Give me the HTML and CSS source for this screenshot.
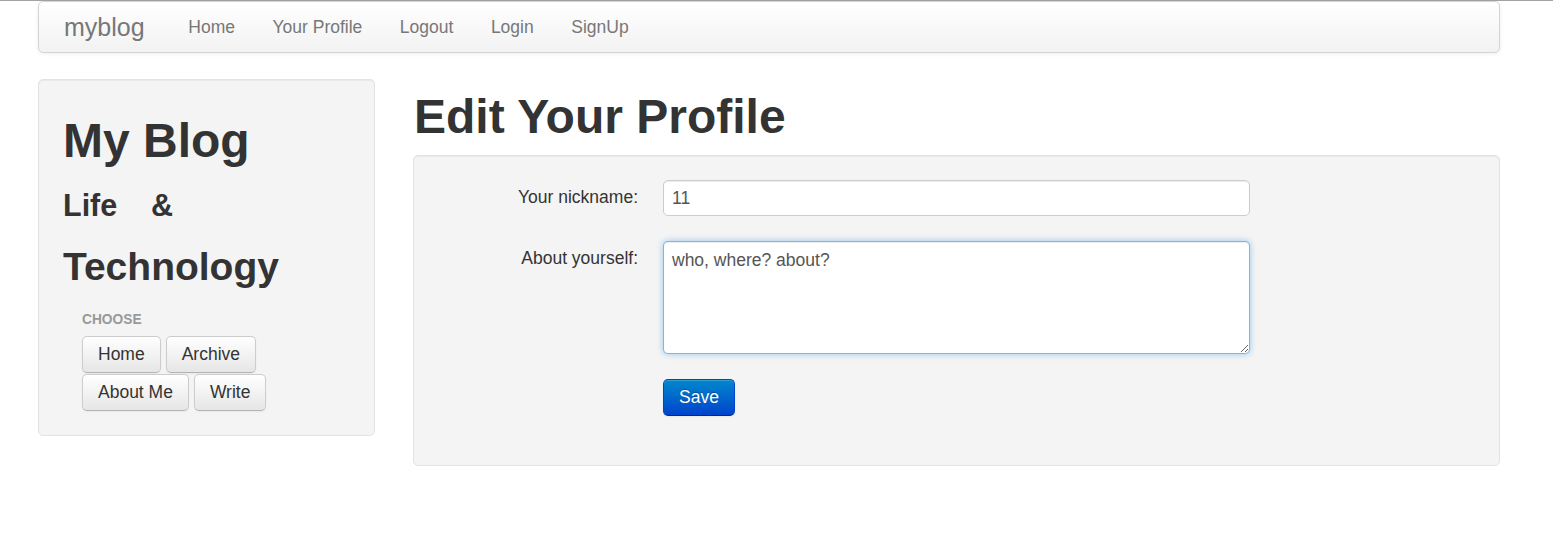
FILE: index.html
```html
<!DOCTYPE html>
<html>
<head>
<meta charset="utf-8">
<title>myblog</title>
<link rel="stylesheet" href="styles.css">
</head>
<body>
<div class="topline"></div>
<div class="container">
  <div class="navbar">
    <a class="brand" href="#">myblog</a>
    <ul class="nav">
      <li><a href="#">Home</a></li>
      <li><a href="#">Your Profile</a></li>
      <li><a href="#">Logout</a></li>
      <li><a href="#">Login</a></li>
      <li><a href="#">SignUp</a></li>
    </ul>
  </div>
  <div class="layout">
    <aside class="well sidebar">
      <h1 class="title">My Blog</h1>
      <h3 class="sub">Life&nbsp;&nbsp;&nbsp;&nbsp;&amp;</h3>
      <h2 class="tech">Technology</h2>
      <div class="nav-list">
        <div class="nav-header">CHOOSE</div>
        <div class="btns">
          <a class="btn" href="#">Home</a>
          <a class="btn" href="#">Archive</a>
          <a class="btn" href="#">About Me</a>
          <a class="btn" href="#">Write</a>
        </div>
      </div>
    </aside>
    <main class="main">
      <h1 class="page-title">Edit Your Profile</h1>
      <form class="well form">
        <div class="group">
          <label class="label">Your nickname:</label>
          <input class="input" type="text" value="11">
        </div>
        <div class="group">
          <label class="label">About yourself:</label>
          <textarea class="input textarea">who, where? about?</textarea>
        </div>
        <div class="group">
          <span class="label"></span>
          <button class="btn btn-primary" type="button">Save</button>
        </div>
      </form>
    </main>
  </div>
</div>
</body>
</html>
```

FILE: styles.css
```css
* { box-sizing: border-box; }
html, body { margin: 0; padding: 0; background: #fff; }
body {
  font-family: "Liberation Sans", Arial, sans-serif;
  font-size: 17.5px;
  line-height: 25px;
  color: #333;
}
.topline { height: 1px; background: #a3a3a3; }
.container { width: 1462px; margin-left: 38px; }

.navbar {
  display: flex;
  align-items: center;
  height: 52px;
  border: 1px solid #d4d4d4;
  border-radius: 5px;
  background: linear-gradient(#ffffff, #f2f2f2);
  box-shadow: 0 1px 4px rgba(0,0,0,0.065);
}
.brand {
  padding: 12px 25px;
  font-size: 25px;
  line-height: 25px;
  color: #777;
  text-decoration: none;
}
.nav { display: flex; list-style: none; margin: 0; padding: 0; }
.nav a {
  display: block;
  padding: 12px 18.75px;
  color: #777;
  text-decoration: none;
  font-size: 17.5px;
}

.layout {
  display: grid;
  grid-template-columns: 337px 1fr;
  column-gap: 38px;
  margin-top: 26px;
  align-items: start;
}
.well {
  background: #f4f4f4;
  border: 1px solid #e3e3e3;
  border-radius: 5px;
  box-shadow: inset 0 1px 1px rgba(0,0,0,0.05);
}
.sidebar { padding: 24px 24px 24px; }
.title {
  margin: 12px 0 0;
  font-size: 48px;
  line-height: 50px;
  font-weight: bold;
}
.sub {
  margin: 14px 0 0;
  font-size: 30.5px;
  line-height: 50px;
  font-weight: bold;
}
.tech {
  margin: 12px 0 0;
  font-size: 39px;
  line-height: 50px;
  font-weight: bold;
}
.nav-list { padding: 0 19px; margin-top: 15px; }
.nav-header {
  font-size: 13.75px;
  line-height: 25px;
  font-weight: bold;
  color: #999;
  text-transform: uppercase;
}
.btns { display: flex; flex-wrap: wrap; gap: 1px 5px; margin-top: 4px; }
.btn {
  display: inline-block;
  padding: 5px 15px;
  font-size: 17.5px;
  line-height: 25px;
  color: #333;
  text-decoration: none;
  border: 1px solid #ccc;
  border-bottom-color: #b3b3b3;
  border-radius: 5px;
  background: linear-gradient(#ffffff, #e6e6e6);
  box-shadow: inset 0 1px 0 rgba(255,255,255,0.2), 0 1px 2px rgba(0,0,0,0.05);
  font-family: inherit;
  cursor: pointer;
}
.btn-primary {
  color: #fff;
  background: linear-gradient(#0088cc, #0044cc);
  border-color: #0044cc #0044cc #002a80;
  text-shadow: 0 -1px 0 rgba(0,0,0,0.25);
}

.main { min-width: 0; }
.page-title {
  margin: 13px 0 0;
  font-size: 48px;
  line-height: 50px;
  font-weight: bold;
  padding-left: 1px;
}
.form { margin: 13px 0 0; padding: 24px 24px 24px; }
.group { display: flex; align-items: flex-start; margin-bottom: 25px; }
.label {
  width: 225px;
  flex: none;
  padding-right: 25px;
  padding-top: 5px;
  text-align: right;
  color: #333;
}
.input {
  width: 587px;
  height: 36px;
  padding: 4px 8px;
  font-family: inherit;
  font-size: 17.5px;
  line-height: 25px;
  color: #555;
  background: #fff;
  border: 1px solid #ccc;
  border-radius: 5px;
  box-shadow: inset 0 1px 1px rgba(0,0,0,0.075);
}
.textarea {
  height: 113px;
  padding-top: 6px;
  border-color: rgba(82,168,236,0.8);
  box-shadow: inset 0 1px 1px rgba(0,0,0,0.075), 0 0 6px rgba(82,168,236,0.6);
  outline: none;
  resize: both;
}
```
